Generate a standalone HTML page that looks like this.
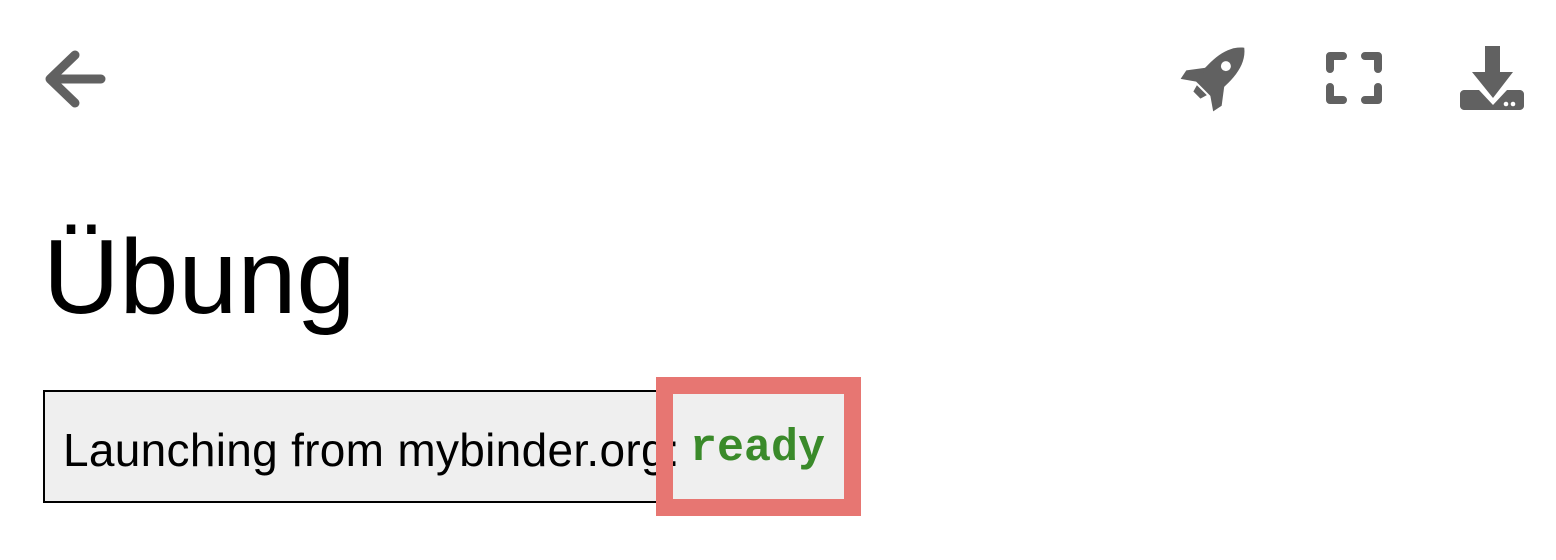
<!DOCTYPE html>
<html><head><meta charset="utf-8"><style>
html,body{margin:0;padding:0;width:1556px;height:560px;background:#fff;overflow:hidden;position:relative;font-family:"Liberation Sans",Arial,sans-serif}
.abs{position:absolute}
</style></head><body>
<svg class="abs" style="left:0;top:0" width="1556" height="140">
 <g fill="none" stroke="#616161" stroke-width="9" stroke-linecap="round" stroke-linejoin="round">
  <path d="M101 79H50M75 55L50 79L75 103"/>
  <path d="M1330 69V56h13M1365 56h13v13M1378 87v13h-13M1343 100h-13v-13" stroke-width="8" stroke-linejoin="round" stroke-linecap="round"/>
 </g>
 <g fill="#616161">
  <g transform="translate(1216,76) rotate(45)">
   <path d="M0,-40C15,-28 15,-6 12,18L-12,18C-15,-6 -15,-28 0,-40z"/>
   <path d="M-12,0L-25,17L-23,27L-10,18z"/>
   <path d="M12,0L25,17L23,27L10,18z"/>
   <path d="M-7,20L7,20L5,27L-5,27z"/>
   <circle cx="0" cy="-14" r="5" fill="#fff"/>
  </g>
  <path d="M1485 46h15v26h13l-20 26 -21 -26h13z"/>
  <path d="M1464 90h15l14 15 14 -15h13c2 0 4 2 4 4v12c0 2 -2 4 -4 4h-56c-2 0 -4 -2 -4 -4v-12c0 -2 2 -4 4 -4z"/>
  <circle cx="1506" cy="104" r="2.3" fill="#fff"/><circle cx="1513" cy="104" r="2.3" fill="#fff"/>
 </g>
</svg>
<div class="abs" style="left:43px;top:222px;font-size:106px;line-height:110px;color:#000">Übung</div>
<div class="abs" style="left:43px;top:390px;width:810px;height:113px;background:#efefef;border:2px solid #000;box-sizing:border-box"></div>
<div class="abs" style="left:63px;top:425px;font-size:46px;line-height:50px;color:#000;white-space:nowrap;letter-spacing:0.3px">Launching from mybinder.org:</div>
<div class="abs" style="left:656px;top:377px;width:205px;height:139px;border:17px solid #e77672;box-sizing:border-box"></div>
<div class="abs" style="left:690px;top:424px;font-family:'Liberation Mono',monospace;font-weight:bold;font-size:45px;line-height:50px;color:#3a8a2a">ready</div>
</body></html>
